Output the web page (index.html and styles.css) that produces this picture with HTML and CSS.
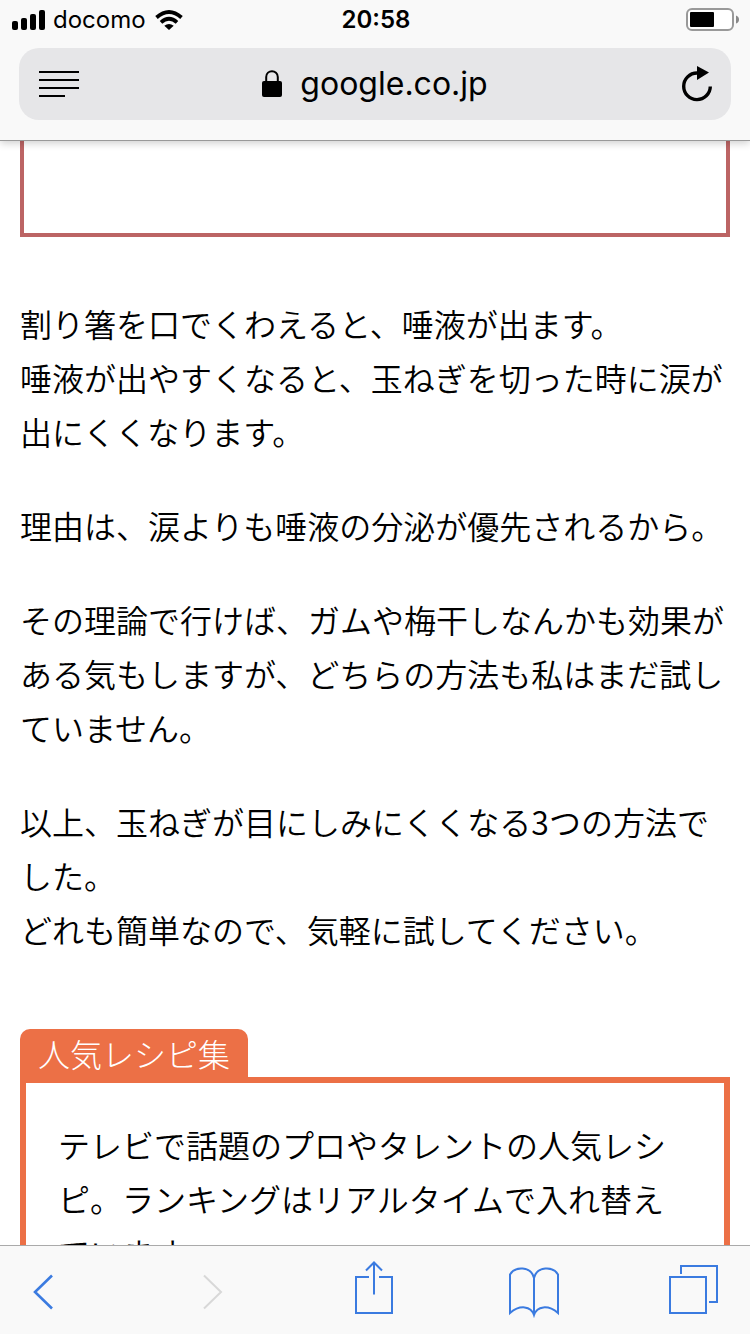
FILE: index.html
```html
<!DOCTYPE html>
<html lang="ja">
<head>
<meta charset="utf-8">
<meta name="viewport" content="width=device-width">
<title>google.co.jp</title>
<link rel="stylesheet" href="styles.css">
</head>
<body>
<header class="top">
  <div class="status">
    <div class="carrier">
      <svg width="34" height="20" viewBox="0 0 34 20" aria-hidden="true"><rect x="0" y="11" width="6" height="9" rx="2"/><rect x="9" y="8" width="6" height="12" rx="2"/><rect x="18" y="4" width="6" height="16" rx="2"/><rect x="27" y="0" width="6" height="20" rx="2"/></svg>
      <span>docomo</span>
      <svg class="wifi" width="28" height="20" viewBox="0 0 28 20" aria-hidden="true"><path d="M1.500 7.500Q14-3.500 26.500 7.500M6 12.300Q14 5.200 22 12.300" fill="none" stroke="#000" stroke-width="3.800"/><path d="M9.300 15.800Q14 12 18.700 15.800L14 20Z"/></svg>
    </div>
    <time class="clock">20:58</time>
    <svg class="battery" width="54" height="24" viewBox="0 0 54 24" role="img" aria-label="バッテリー"><rect x="1" y="1" width="46" height="21" rx="5" fill="#fff" stroke="#999" stroke-width="2"/><rect x="4" y="4" width="24" height="15" rx="1"/><path d="M50 7.500Q53 8.500 53 11.500T50 15.500Z" fill="#888"/></svg>
  </div>
  <div class="address">
    <button class="icon-button" aria-label="リーダー表示"><svg width="40" height="32" viewBox="0 0 40 32"><path d="M0 4H40M0 12H40M0 20H40M0 28H26" stroke="#000" stroke-width="2"/></svg></button>
    <button class="site">
      <svg width="20" height="28" viewBox="0 0 20 28" aria-hidden="true"><rect x="0" y="11" width="20" height="16" rx="2"/><path d="M4.200 12V7C4.200-.7 15.800-.7 15.800 7V12" fill="none" stroke="#000" stroke-width="2"/></svg>
      <span>google.co.jp</span>
    </button>
    <button class="icon-button" aria-label="再読み込み"><svg width="32" height="38" viewBox="0 0 32 38"><path d="M16 8A13.300 13.300 0 1 0 29.300 21.500" fill="none" stroke="#000" stroke-width="3.400"/><path d="M16 1L28 7.500L16 15Z"/></svg></button>
  </div>
</header>
<main class="page">
  <div class="red-box"></div>
  <article class="article">
    <p>割り箸を口でくわえると、唾液が出ます。<br>唾液が出やすくなると、玉ねぎを切った時に涙が出にくくなります。</p>
    <p>理由は、涙よりも唾液の分泌が優先されるから。</p>
    <p>その理論で行けば、ガムや梅干しなんかも効果がある気もしますが、どちらの方法も私はまだ試していません。</p>
    <p>以上、玉ねぎが目にしみにくくなる3つの方法でした。<br>どれも簡単なので、気軽に試してください。</p>
  </article>
  <section class="recipes">
    <h2 class="recipes-title">人気レシピ集</h2>
    <p class="recipes-body">テレビで話題のプロやタレントの人気レシピ。ランキングはリアルタイムで入れ替えています。</p>
  </section>
</main>
<nav class="toolbar">
  <button aria-label="戻る"><svg width="52" height="60" viewBox="0 0 52 60"><path d="M23 15.500L6 32L23 48.500" stroke-width="2.600"/></svg></button>
  <button aria-label="進む" disabled><svg width="52" height="60" viewBox="0 0 52 60"><path d="M15 15.500L32 32L15 48.500"/></svg></button>
  <button aria-label="共有"><svg width="52" height="60" viewBox="0 0 52 60"><path d="M20 17H7V53H43V17H30M25 34.500V2.500M17 10.500L25 2.500L33 10.500"/></svg></button>
  <button aria-label="ブックマーク"><svg width="52" height="60" viewBox="0 0 52 60"><path d="M25 18C22 6 6 6 1 14.500V53C11 44.500 22 46 25 55C28 46 39 44.500 49 53V14.500C44 6 28 6 25 18V54"/></svg></button>
  <button aria-label="タブ"><svg width="52" height="60" viewBox="0 0 52 60"><path d="M1 17H37V53H1ZM12 14V6H48V42H40"/></svg></button>
</nav>
</body>
</html>
```
FILE: styles.css
```css
* {
  box-sizing: border-box;
}

body {
  display: flex;
  flex-direction: column;
  height: 100vh;
  margin: 0;
  background: #fff;
  color: #000;
  font-family: "Noto Sans CJK JP", sans-serif;
  font-size: 32px;
  font-weight: 350;
  line-height: 54px;
}

button {
  margin: 0;
  padding: 0;
  border: 0;
  background: none;
  color: inherit;
  font: inherit;
}

svg {
  display: block;
}

.top {
  z-index: 1;
  padding-bottom: 20px;
  border-bottom: 1px solid #999;
  background: #f9f9f9;
  box-shadow: 0 2px 8px rgba(0, 0, 0, 0.2);
  font-family: Inter, sans-serif;
}

.status {
  display: grid;
  grid-template-columns: 1fr auto 1fr;
  align-items: center;
  height: 40px;
  margin-bottom: 8px;
  padding: 0 10px 0 12px;
  font-size: 24px;
  font-weight: 400;
  line-height: 40px;
}

.carrier {
  display: flex;
  align-items: center;
  gap: 7px;
}

.wifi {
  margin-left: 2px;
}

.clock {
  font-weight: 600;
}

.battery {
  justify-self: end;
}

.address {
  display: flex;
  align-items: center;
  justify-content: space-between;
  height: 72px;
  margin: 0 19px;
  padding: 0 18px 0 20px;
  border-radius: 20px;
  background: #e6e6e8;
}

.site {
  display: flex;
  align-items: center;
  gap: 18px;
  padding-right: 10px;
  font-size: 32px;
  font-weight: 400;
}

.page {
  flex: 1;
  min-height: 0;
  overflow: hidden;
  padding: 0 20px;
}

.red-box {
  height: 96px;
  border: 4px solid #bc6464;
  border-top: 0;
}

.article {
  padding: 59px 0 73px;
}

.article p {
  margin: 0;
}

.article p + p {
  margin-top: 40px;
}

.recipes-title {
  width: fit-content;
  margin: 0;
  padding: 0 18px;
  border-radius: 10px 10px 0 0;
  background: #ec7046;
  color: #fff;
  font-size: 32px;
  font-weight: 300;
  line-height: 48px;
}

.recipes-body {
  margin: 0;
  padding: 34px 32px;
  border: 6px solid #ec7046;
}

.toolbar {
  z-index: 1;
  display: flex;
  align-items: center;
  justify-content: space-between;
  padding: 14px 29px;
  border-top: 1px solid #aaa;
  background: #f9f9f9;
  color: #3b7be0;
}

.toolbar button:disabled {
  color: #d8d8d8;
}

.toolbar svg {
  fill: none;
  stroke: currentColor;
  stroke-width: 2;
}
```
